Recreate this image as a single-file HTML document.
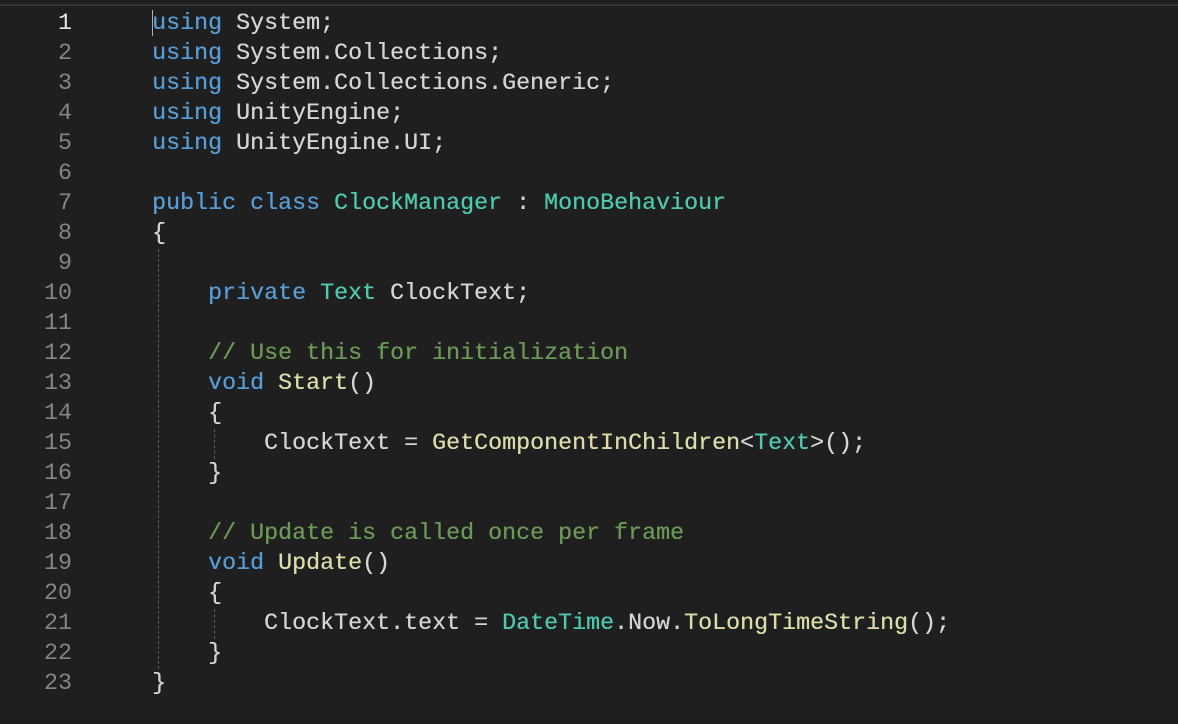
<!DOCTYPE html>
<html><head><style>
html,body{margin:0;padding:0;}
body{width:1178px;height:724px;background:#1f1f1f;overflow:hidden;position:relative;font-family:"Liberation Mono","DejaVu Sans Mono",monospace;font-size:23.33px;}
.top{position:absolute;left:0;top:4px;width:1178px;height:2px;background:#343434;}
.w{position:absolute;left:0;top:2px;width:1178px;height:720px;}
.ln{position:absolute;left:0;width:72px;text-align:right;color:#858585;line-height:30px;}
.ln.a{color:#e6e6e6;}
.code{position:absolute;left:152px;top:7px;color:#d4d4d4;line-height:30px;white-space:pre;text-shadow:0.3px 0 0 currentColor;}
.k{color:#569cd6}.t{color:#4ec9b0}.f{color:#dcdcaa}.c{color:#6a9955}
.g{position:absolute;width:0;border-left:1px dashed #5a5a5a;}
.cur{position:absolute;left:152px;top:8px;width:1px;height:26px;background:#aeafad;}
</style></head><body>
<div class="top"></div>
<div class="w">
<div class="g" style="left:158px;top:247px;height:420px"></div>
<div class="g" style="left:214px;top:427px;height:30px"></div>
<div class="g" style="left:214px;top:607px;height:30px"></div>
<div class="cur"></div>
<div class="ln a" style="top:7px">1</div>
<div class="ln" style="top:37px">2</div>
<div class="ln" style="top:67px">3</div>
<div class="ln" style="top:97px">4</div>
<div class="ln" style="top:127px">5</div>
<div class="ln" style="top:157px">6</div>
<div class="ln" style="top:187px">7</div>
<div class="ln" style="top:217px">8</div>
<div class="ln" style="top:247px">9</div>
<div class="ln" style="top:277px">10</div>
<div class="ln" style="top:307px">11</div>
<div class="ln" style="top:337px">12</div>
<div class="ln" style="top:367px">13</div>
<div class="ln" style="top:397px">14</div>
<div class="ln" style="top:427px">15</div>
<div class="ln" style="top:457px">16</div>
<div class="ln" style="top:487px">17</div>
<div class="ln" style="top:517px">18</div>
<div class="ln" style="top:547px">19</div>
<div class="ln" style="top:577px">20</div>
<div class="ln" style="top:607px">21</div>
<div class="ln" style="top:637px">22</div>
<div class="ln" style="top:667px">23</div>
<div class="code"><span class="k">using</span> System;
<span class="k">using</span> System.Collections;
<span class="k">using</span> System.Collections.Generic;
<span class="k">using</span> UnityEngine;
<span class="k">using</span> UnityEngine.UI;

<span class="k">public</span> <span class="k">class</span> <span class="t">ClockManager</span> : <span class="t">MonoBehaviour</span>
{

    <span class="k">private</span> <span class="t">Text</span> ClockText;

    <span class="c">// Use this for initialization</span>
    <span class="k">void</span> <span class="f">Start</span>()
    {
        ClockText = <span class="f">GetComponentInChildren</span>&lt;<span class="t">Text</span>&gt;();
    }

    <span class="c">// Update is called once per frame</span>
    <span class="k">void</span> <span class="f">Update</span>()
    {
        ClockText.text = <span class="t">DateTime</span>.Now.<span class="f">ToLongTimeString</span>();
    }
}</div>
</div>
</body></html>
